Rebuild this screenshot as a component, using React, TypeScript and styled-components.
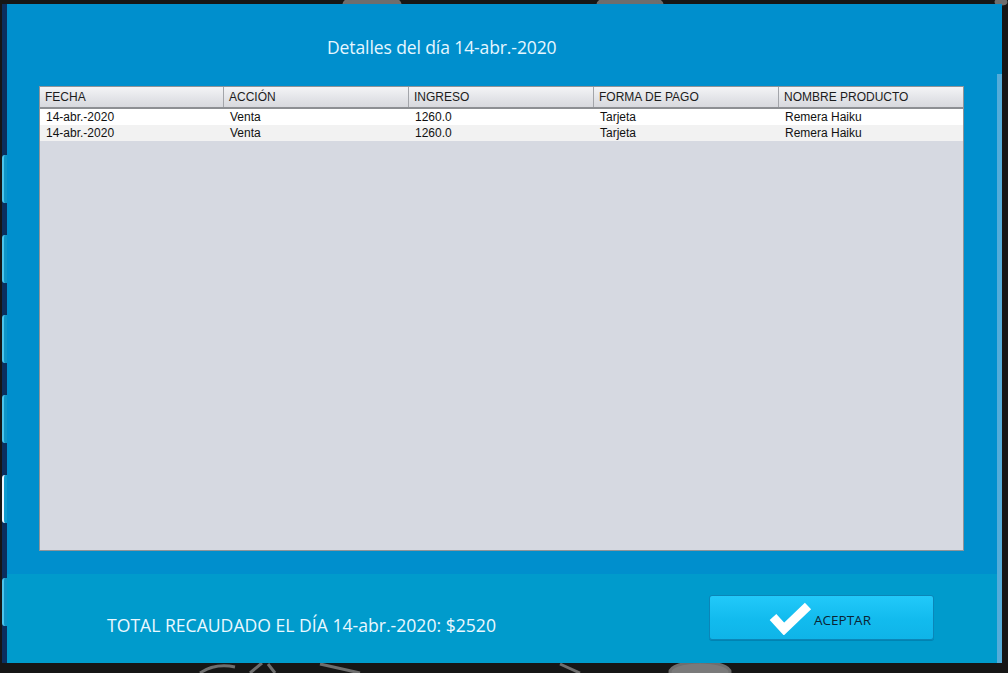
import React from "react";
import styled, { createGlobalStyle } from "styled-components";

const Global = createGlobalStyle`
  html, body { margin: 0; padding: 0; background: #161616; }
  body { font-family: "Liberation Sans", Arial, sans-serif; }
  * { box-sizing: border-box; }
`;

const Screen = styled.div`
  position: relative;
  width: 1008px;
  height: 673px;
  overflow: hidden;
  background: #161616;
  display: flex;
  flex-direction: column;
  padding-top: 4px;
`;

const Backdrop = styled.svg`
  position: absolute;
  inset: 0;
  width: 1008px;
  height: 673px;
  pointer-events: none;
`;

const Row = styled.div`
  position: relative;
  display: flex;
  height: 659px;
`;

const SideStrip = styled.div`
  width: 5px;
  margin-left: 2px;
  background: #0b2f5f;
  display: flex;
  flex-direction: column;
  padding-top: 151px;
  gap: 32px;
`;

const Tab = styled.div<{ $active?: boolean; $gapTop?: number }>`
  width: 5px;
  height: 48px;
  margin-top: ${(p) => p.$gapTop ?? 0}px;
  border-radius: 3px 0 0 3px;
  background: ${(p) => (p.$active ? "#0d9ccf" : "#0f95c7")};
  border-left: 2px solid ${(p) => (p.$active ? "#e9f7ff" : "#4cc4ec")};
`;

const Dialog = styled.div`
  width: 990px;
  display: flex;
  flex-direction: column;
`;

const RightEdge = styled.div`
  width: 5px;
  background: linear-gradient(#008fcd 0, #008fcd 70px, #55acd9 70px, #55acd9 100%);
`;

const TopSection = styled.section`
  height: 570px;
  background: #008fcd;
  padding: 32px 33px 23px 32px;
  display: flex;
  flex-direction: column;
`;

const Title = styled.h1`
  margin: 0 0 28px 288px;
  height: 22px;
  font-family: "Segoe UI", "Open Sans", sans-serif;
  font-weight: 400;
  font-size: 17.5px;
  line-height: 22px;
  color: #e6f7ff;
  letter-spacing: -0.1px;
  white-space: nowrap;
`;

const Table = styled.div`
  flex: 1;
  border: 1px solid #8f9499;
  background: #d6d9e1;
  display: flex;
  flex-direction: column;
`;

const Grid = styled.div`
  display: grid;
  grid-template-columns: 184px 185px 185px 185px 1fr;
`;

const HeaderRow = styled(Grid)`
  height: 22px;
  background: linear-gradient(#f4f4f6, #e2e3e7 60%, #d8d9de);
  border-bottom: 2px solid #8d8f93;
`;

const HeaderCell = styled.div`
  font-size: 12px;
  line-height: 20px;
  color: #1c1c1c;
  padding-left: 5px;
  border-right: 1px solid #a3a5aa;
  white-space: nowrap;
  &:last-child { border-right: none; }
`;

const BodyRow = styled(Grid)<{ $alt?: boolean }>`
  height: 16px;
  background: ${(p) => (p.$alt ? "#f2f2f2" : "#ffffff")};
`;

const Cell = styled.div`
  font-size: 12px;
  line-height: 16px;
  color: #111;
  padding-left: 6px;
  white-space: nowrap;
`;

const BottomSection = styled.section`
  flex: 1;
  background: #009bcc;
  display: flex;
  align-items: center;
  padding: 0 63px 0 100px;
  justify-content: space-between;
`;

const Total = styled.div`
  font-family: "Segoe UI", "Open Sans", sans-serif;
  font-size: 17.6px;
  color: #eaf8ff;
  margin-top: 12px;
  white-space: nowrap;
`;

const Button = styled.button`
  width: 225px;
  height: 45px;
  border-radius: 3px;
  border: 1px solid #0b86b8;
  background: linear-gradient(#22c9fa, #12bbee 55%, #0fb4e8);
  display: flex;
  align-items: center;
  justify-content: center;
  gap: 2px;
  padding: 0 4px 0 0;
  cursor: pointer;
  box-shadow: 0 1px 0 rgba(0, 60, 100, 0.25);
  margin-top: -2px;
`;

const ButtonLabel = styled.span`
  font-family: "Segoe UI", "Open Sans", sans-serif;
  font-size: 13.5px;
  color: #0b2433;
  margin-top: 4px;
`;

const columns = ["FECHA", "ACCIÓN", "INGRESO", "FORMA DE PAGO", "NOMBRE PRODUCTO"];
const rows = [
  ["14-abr.-2020", "Venta", "1260.0", "Tarjeta", "Remera Haiku"],
  ["14-abr.-2020", "Venta", "1260.0", "Tarjeta", "Remera Haiku"],
];

const Check = () => (
  <svg width="44" height="34" viewBox="0 0 44 34">
    <polyline
      points="5,16 16,28 40,5"
      fill="none"
      stroke="#ffffff"
      strokeWidth="9"
      strokeLinejoin="miter"
    />
  </svg>
);

export default function App() {
  return (
    <>
      <Global />
      <Screen>
        <Backdrop viewBox="0 0 1008 673">
          <g fill="none" stroke="#6e6e6e" strokeWidth="3">
            <ellipse cx="372" cy="4" rx="28" ry="8" fill="#6e6e6e" />
            <ellipse cx="630" cy="4" rx="32" ry="8" fill="#6e6e6e" />
            <ellipse cx="1001" cy="2" rx="5" ry="2" fill="#6e6e6e" />
            <path d="M200 673 Q215 663 235 667" />
            <path d="M250 673 L262 663 M275 673 L268 664" />
            <path d="M320 664 L360 673" />
            <path d="M560 664 L580 673" />
            <ellipse cx="700" cy="672" rx="30" ry="10" fill="#7a7a7a" />
          </g>
        </Backdrop>
        <Row>
          <SideStrip>
            <Tab />
            <Tab />
            <Tab />
            <Tab />
            <Tab $active />
            <Tab $gapTop={23} />
          </SideStrip>
          <Dialog>
            <TopSection>
              <Title>Detalles del día 14-abr.-2020</Title>
              <Table>
                <HeaderRow>
                  {columns.map((c) => (
                    <HeaderCell key={c}>{c}</HeaderCell>
                  ))}
                </HeaderRow>
                {rows.map((r, i) => (
                  <BodyRow key={i} $alt={i % 2 === 1}>
                    {r.map((v, j) => (
                      <Cell key={j}>{v}</Cell>
                    ))}
                  </BodyRow>
                ))}
              </Table>
            </TopSection>
            <BottomSection>
              <Total>TOTAL RECAUDADO EL DÍA 14-abr.-2020: $2520</Total>
              <Button>
                <Check />
                <ButtonLabel>ACEPTAR</ButtonLabel>
              </Button>
            </BottomSection>
          </Dialog>
          <RightEdge />
        </Row>
      </Screen>
    </>
  );
}
